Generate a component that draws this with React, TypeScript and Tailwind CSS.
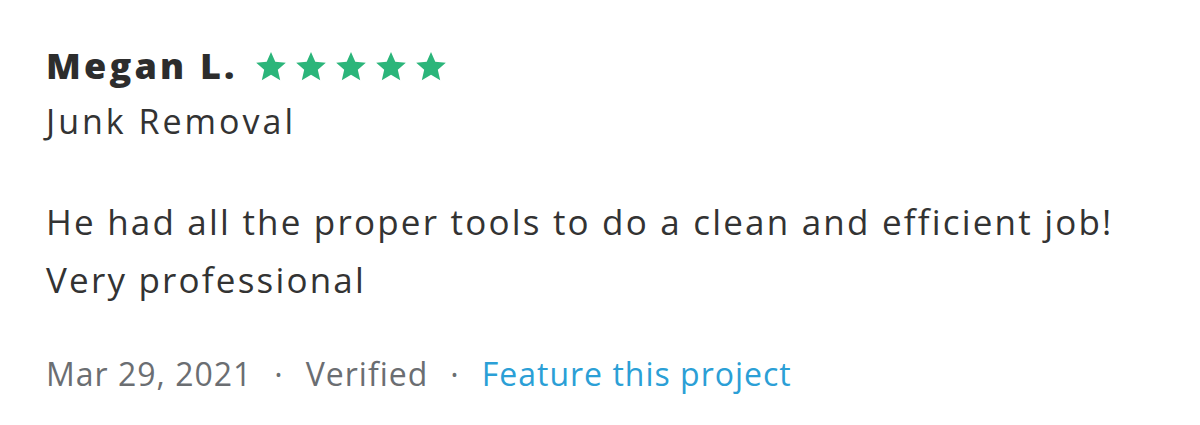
const Star = () => (
  <svg viewBox="0 0 24 24" className="w-[32px] h-[32px]" fill="#2bb57a">
    <path d="M12 1.5l3.2 7.3 7.9.7-6 5.3 1.8 7.8L12 18.5l-6.9 4.1 1.8-7.8-6-5.3 7.9-.7z" />
  </svg>
);

export default function App() {
  return (
    <div className="w-[1200px] h-[425px] bg-white px-[46px] pt-[42px] font-['Open_Sans',sans-serif]">
      <div className="flex items-center h-[48px]">
        <h2 className="text-[36px] font-extrabold text-[#2d2d2d] leading-[48px] tracking-[3.2px]">Megan L.</h2>
        <div className="flex gap-[8px] ml-[17px]">
          {[0, 1, 2, 3, 4].map((i) => (
            <Star key={i} />
          ))}
        </div>
      </div>
      <p className="text-[34px] text-[#333] leading-[48px] mt-[7px] tracking-[3px]">Junk Removal</p>
      <p className="text-[35px] text-[#333] leading-[58px] mt-[48px] tracking-[2.2px]">
        He had all the proper tools to do a clean and efficient job!
        <br />
        Very professional
      </p>
      <div className="flex items-center mt-[43px] text-[32px] leading-[44px] tracking-[1px]">
        <span className="text-[#6b6e72]">Mar 29, 2021</span>
        <span className="text-[#6b6e72] mx-[22px]">·</span>
        <span className="text-[#6b6e72]">Verified</span>
        <span className="text-[#6b6e72] mx-[22px]">·</span>
        <span className="text-[#2b9fd6]">Feature this project</span>
      </div>
    </div>
  );
}
